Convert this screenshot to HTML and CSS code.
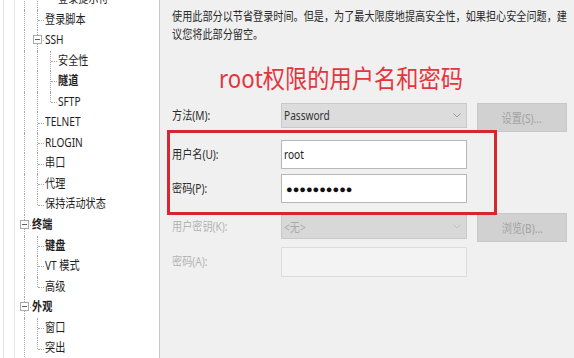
FILE: index.html
```html
<!DOCTYPE html>
<html lang="zh-CN">
<head>
<meta charset="utf-8">
<title>用户身份验证</title>
<link rel="stylesheet" href="styles.css">
</head>
<body>
<div class="dlg">
  <nav class="tree">
    <div class="rows">
      <div class="node"><i class="g pipe"></i><i class="g pipe"></i><i class="g elbow"></i><span class="lbl"><span class="t">登录提示符</span></span></div>
      <div class="node"><i class="g pipe"></i><i class="g tee"></i><span class="lbl"><span class="t">登录脚本</span></span></div>
      <div class="node"><i class="g pipe"></i><i class="g tee"><b class="box"></b></i><span class="lbl"><span class="t">SSH</span></span></div>
      <div class="node"><i class="g pipe"></i><i class="g pipe"></i><i class="g tee"></i><span class="lbl"><span class="t">安全性</span></span></div>
      <div class="node"><i class="g pipe"></i><i class="g pipe"></i><i class="g tee"></i><span class="lbl b"><span class="t">隧道</span></span></div>
      <div class="node"><i class="g pipe"></i><i class="g pipe"></i><i class="g elbow"></i><span class="lbl"><span class="t">SFTP</span></span></div>
      <div class="node"><i class="g pipe"></i><i class="g tee"></i><span class="lbl"><span class="t">TELNET</span></span></div>
      <div class="node"><i class="g pipe"></i><i class="g tee"></i><span class="lbl"><span class="t">RLOGIN</span></span></div>
      <div class="node"><i class="g pipe"></i><i class="g tee"></i><span class="lbl"><span class="t">串口</span></span></div>
      <div class="node"><i class="g pipe"></i><i class="g tee"></i><span class="lbl"><span class="t">代理</span></span></div>
      <div class="node"><i class="g pipe"></i><i class="g elbow"></i><span class="lbl"><span class="t">保持活动状态</span></span></div>
      <div class="node"><i class="g tee"><b class="box"></b></i><span class="lbl b"><span class="t">终端</span></span></div>
      <div class="node"><i class="g pipe"></i><i class="g tee"></i><span class="lbl b"><span class="t">键盘</span></span></div>
      <div class="node"><i class="g pipe"></i><i class="g tee"></i><span class="lbl"><span class="t">VT 模式</span></span></div>
      <div class="node"><i class="g pipe"></i><i class="g elbow"></i><span class="lbl"><span class="t">高级</span></span></div>
      <div class="node"><i class="g tee"><b class="box"></b></i><span class="lbl b"><span class="t">外观</span></span></div>
      <div class="node"><i class="g pipe"></i><i class="g tee"></i><span class="lbl"><span class="t">窗口</span></span></div>
      <div class="node"><i class="g pipe"></i><i class="g elbow"></i><span class="lbl"><span class="t">突出</span></span></div>
    </div>
  </nav>
  <main class="main">
    <div class="desc">
      <div><span class="t">使用此部分以节省登录时间。但是，为了最大限度地提高安全性，如果担心安全问题，建</span></div>
      <div><span class="t">议您将此部分留空。</span></div>
    </div>
    <div class="anno"><span class="t">root权限的用户名和密码</span></div>
    <div class="form">
      <div class="frow">
        <div class="flabel short"><span class="t">方法(M):</span></div>
        <div class="select"><span class="t">Password</span><svg class="chev" width="8" height="5" viewBox="0 0 8 5"><polyline points="0.5,0.5 4,4 7.5,0.5" fill="none" stroke="#9a9a9a" stroke-width="1"/></svg></div>
        <div class="btn"><span class="t">设置(S)...</span></div>
      </div>
      <div class="frow gap8">
        <div class="flabel"><span class="t">用户名(U):</span></div>
        <div class="input"><span class="t">root</span></div>
      </div>
      <div class="frow gap5">
        <div class="flabel"><span class="t">密码(P):</span></div>
        <div class="input"><span class="dots">●●●●●●●●●●</span></div>
      </div>
      <div class="frow gap10">
        <div class="flabel off key"><span class="t">用户密钥(K):</span></div>
        <div class="select dis"><span class="t">&lt;无&gt;</span><svg class="chev" width="8" height="5" viewBox="0 0 8 5"><polyline points="0.5,0.5 4,4 7.5,0.5" fill="none" stroke="#c2c2c2" stroke-width="1"/></svg></div>
        <div class="btn"><span class="t">浏览(B)...</span></div>
      </div>
      <div class="frow gap5">
        <div class="flabel off tall"><span class="t">密码(A):</span></div>
        <div class="input off"></div>
      </div>
    </div>
    <div class="mark"></div>
  </main>
</div>
</body>
</html>
```

FILE: styles.css
```css
* { box-sizing: border-box; }
html, body { margin: 0; padding: 0; }
body {
  width: 574px;
  height: 358px;
  overflow: hidden;
  background: #fff;
  font-family: "Noto Sans", "Noto Sans CJK SC", sans-serif;
  font-size: 12.5px;
  color: #222;
}
.t {
  display: inline-block;
  transform: scaleX(0.81);
  transform-origin: 0 50%;
  white-space: nowrap;
}

.dlg { display: flex; height: 358px; overflow: hidden; }

/* ---------- tree ---------- */
.tree {
  flex: none;
  width: 156px;
  margin-left: 3px;
  border-left: 1px solid #e4e4e4;
  background:
    linear-gradient(90deg, transparent 10px, #e8e8e8 10px, #e8e8e8 11px, transparent 11px),
    #fff;
  overflow: hidden;
}
.rows { margin-top: -11px; padding-left: 14px; }
.node { display: flex; height: 20.56px; }
.g { flex: none; width: 13px; position: relative; }
.pipe::before, .tee::before, .elbow::before {
  content: "";
  position: absolute;
  left: 6px; top: 0; bottom: 0;
  border-left: 1px dotted #a8a8a8;
}
.elbow::before { bottom: 50%; }
.tee::after, .elbow::after {
  content: "";
  position: absolute;
  left: 7px; right: 0; top: 50%;
  border-top: 1px dotted #a8a8a8;
}
.box {
  position: absolute;
  left: 2px; top: 50%;
  width: 9px; height: 9px;
  margin-top: -5px;
  border: 1px solid #a8a8a8;
  background: #fff;
  z-index: 1;
}
.box::after {
  content: "";
  position: absolute;
  left: 1px; right: 1px; top: 3px;
  border-top: 1px solid #606060;
}
.lbl { margin-left: 1px; line-height: 20.56px; color: #1e1e1e; }
.lbl.b { font-weight: 700; }

/* ---------- main ---------- */
.main {
  flex: 1;
  min-width: 0;
  overflow: hidden;
  position: relative;
  background: #f0f0f0;
  border-left: 1px solid #c8c8c8;
  padding: 8px 6px 0 12px;
}
.desc { line-height: 18px; color: #2a2a2a; }
.anno {
  margin-top: 19px;
  height: 30px;
  line-height: 30px;
  padding-left: 47px;
  font-size: 25px;
  color: #e2353d;
}
.anno .t { transform: scaleX(0.89); }

.form { margin-top: 10px; }
.frow {
  display: grid;
  grid-template-columns: 99px 186px 90px;
  column-gap: 10px;
  align-items: start;
}
.gap5 { margin-top: 5px; }
.gap8 { margin-top: 8px; }
.gap10 { margin-top: 10px; }

.flabel { height: 29px; line-height: 29px; color: #2a2a2a; }
.flabel.short { height: 25px; line-height: 25px; }
.flabel.key { height: 27px; line-height: 27px; }
.flabel.tall { height: 30px; line-height: 30px; }
.flabel.off { color: #b4b4b4; }

.select {
  height: 25px;
  display: flex;
  align-items: center;
  justify-content: space-between;
  padding: 0 5px 0 2px;
  background: #dcdcdc;
  border: 1px solid #cacaca;
  color: #333;
}
.select.dis { margin-top: 1px; color: #ababab; background: #d8d8d8; }
.chev { flex: none; }

.btn {
  height: 29px;
  display: flex;
  align-items: center;
  justify-content: center;
  background: #d1d1d1;
  border: 1px solid #c8c8c8;
  color: #a2a2a2;
}
.btn .t { transform-origin: 50% 50%; }

.input {
  height: 29px;
  line-height: 27px;
  padding-left: 2px;
  background: #fff;
  border: 1px solid #b7b7b7;
  color: #222;
}
.input.off { height: 30px; background: #f3f3f3; border-color: #dcdcdc; }
.dots {
  font-family: "Liberation Sans", "DejaVu Sans", sans-serif;
  font-size: 11px;
  color: #111;
  padding-left: 2px;
}

.mark {
  position: absolute;
  left: 7px;
  top: 130px;
  width: 330px;
  height: 85px;
  border: 3px solid #d6262f;
}
```
